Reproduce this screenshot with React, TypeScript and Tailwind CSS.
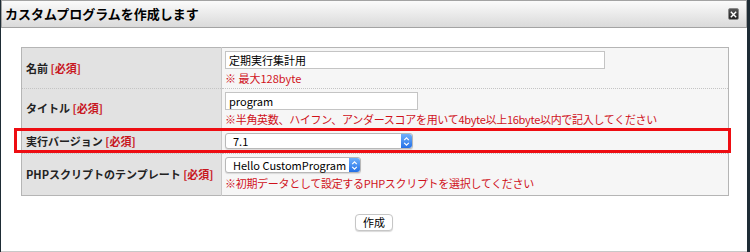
const font = { fontFamily: '"Noto Sans CJK JP", "Noto Sans", sans-serif' };

function Req() {
  return <span className="font-bold text-[#c8161e]">[必須]</span>;
}

function Stepper() {
  return (
    <span className="flex w-[11px] items-center justify-center self-stretch rounded-r-[3px] bg-gradient-to-b from-[#6fb0fb] to-[#2370e6]">
      <svg width="7" height="11" viewBox="0 0 7 11">
        <path d="M1.2 4.2 L3.5 1.8 L5.8 4.2 M1.2 6.8 L3.5 9.2 L5.8 6.8" stroke="white" strokeWidth="1.2" fill="none" />
      </svg>
    </span>
  );
}

function Select({ value, width }: { value: string; width: string }) {
  return (
    <div className={`flex h-[16px] ${width} items-center rounded-[3px] border border-[#b8b8b8] bg-white shadow-[0_1px_1px_rgba(0,0,0,0.12)]`}>
      <span className="flex-1 pl-[7px] text-[11px] leading-none text-black">{value}</span>
      <Stepper />
    </div>
  );
}

function Input({ value, width }: { value: string; width: string }) {
  return (
    <div className={`flex h-[18px] ${width} items-center border border-[#c4c4c4] bg-white pl-[3px] text-[11px] text-black`}>
      {value}
    </div>
  );
}

function Note({ children, tight }: { children: React.ReactNode; tight?: boolean }) {
  return (
    <div className={`mt-[1px] text-[11px] leading-[16px] text-[#d0121b] ${tight ? "tracking-[-0.3px]" : ""}`}>
      {children}
    </div>
  );
}

const labelCell = "w-[200px] bg-[#e2e2e2] pl-[4px] align-middle text-[11px] font-bold text-[#222] border-r border-[#c8c8c8]";
const valueCell = "bg-[#f6f6f6] pl-[3px] align-top";

export default function App() {
  return (
    <div className="flex h-[252px] w-[750px] bg-[#1e2c35]" style={font}>
      <div className="ml-[1px] flex w-[746px] flex-col border-b border-[#c8c8c8] bg-white">
        <div className="flex h-[28px] items-center justify-between border border-[#a3a3a3] bg-gradient-to-b from-[#fbfbfb] to-[#dadada] pl-[3px] pr-[7px]">
          <span className="text-[13px] font-bold text-black">カスタムプログラムを作成します</span>
          <span className="flex h-[12px] w-[11px] items-center justify-center rounded-[2px] border border-[#888] bg-gradient-to-b from-[#555] to-[#222]">
            <svg width="7" height="7" viewBox="0 0 7 7">
              <path d="M0.8 0.8 L6.2 6.2 M6.2 0.8 L0.8 6.2" stroke="white" strokeWidth="1.4" />
            </svg>
          </span>
        </div>

        <div className="relative ml-[20px] mt-[19px] w-[708px]">
          <table className="w-full border-collapse border border-[#b5b5b5]">
            <tbody>
              <tr className="h-[41px] border-b border-dotted border-[#c4c4c4]">
                <td className={labelCell}>名前 <Req /></td>
                <td className={`${valueCell} pt-[3px]`}>
                  <Input value="定期実行集計用" width="w-[380px]" />
                  <Note>※ 最大128byte</Note>
                </td>
              </tr>
              <tr className="h-[40px] border-b border-dotted border-[#c4c4c4]">
                <td className={labelCell}>タイトル <Req /></td>
                <td className={`${valueCell} pt-[3px]`}>
                  <Input value="program" width="w-[193px]" />
                  <Note tight>※半角英数、ハイフン、アンダースコアを用いて4byte以上16byte以内で記入してください</Note>
                </td>
              </tr>
              <tr className="h-[25px] border-b border-dotted border-[#c4c4c4]">
                <td className={labelCell}>実行バージョン <Req /></td>
                <td className="bg-[#f6f6f6] pl-[3px] align-middle">
                  <Select value="7.1" width="w-[188px]" />
                </td>
              </tr>
              <tr className="h-[42px]">
                <td className={labelCell}>PHPスクリプトのテンプレート <Req /></td>
                <td className={`${valueCell} pt-[3px]`}>
                  <div className="h-[17px]">
                    <Select value="Hello CustomProgram" width="w-[136px]" />
                  </div>
                  <Note tight>※初期データとして設定するPHPスクリプトを選択してください</Note>
                </td>
              </tr>
            </tbody>
          </table>
          <div className="pointer-events-none absolute left-[-7px] top-[81px] h-[25px] w-[717px] border-[3px] border-[#ee0d12]" />
        </div>

        <div className="flex flex-1 items-center justify-center pb-[2px]">
          <button className="h-[17px] rounded-[4px] border border-[#c6c6c6] bg-white px-[7px] text-[11px] leading-none text-black shadow-[0_1px_1px_rgba(0,0,0,0.15)]">
            作成
          </button>
        </div>
      </div>
    </div>
  );
}
